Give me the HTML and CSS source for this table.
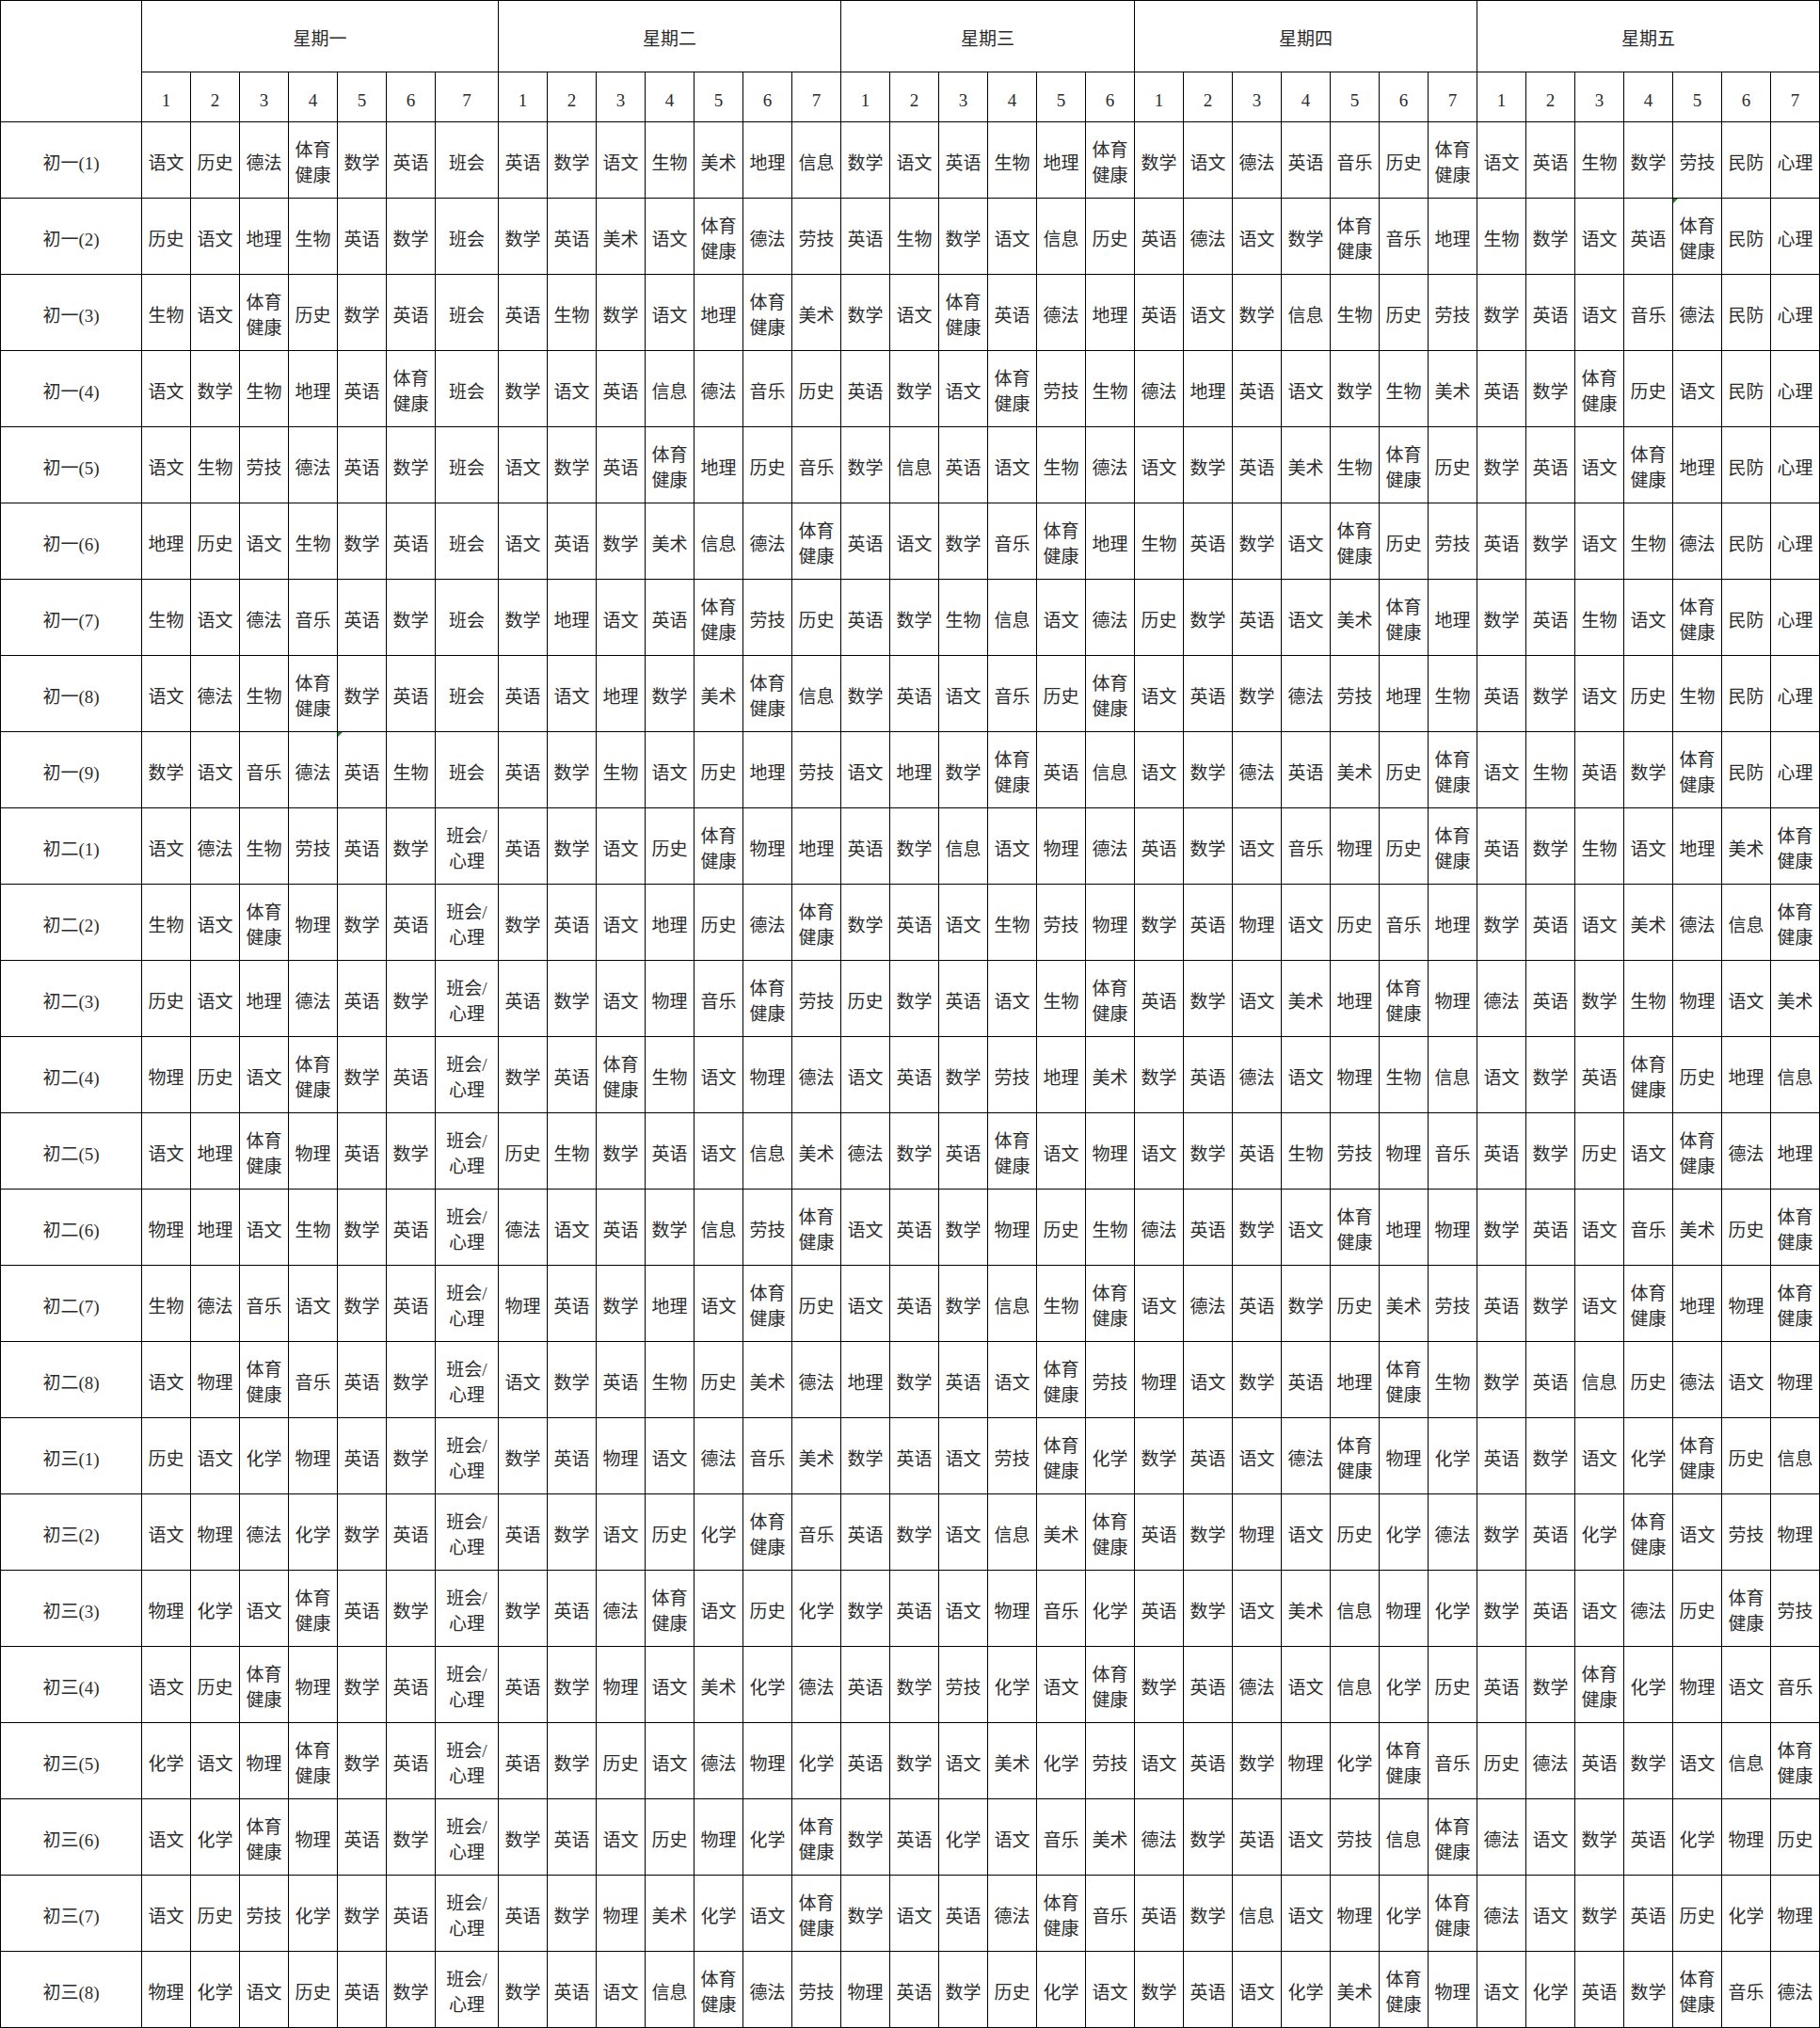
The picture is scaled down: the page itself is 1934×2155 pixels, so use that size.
FILE: index.html
```html
<!DOCTYPE html>
<html lang="zh-CN">
<head>
<meta charset="utf-8">
<title>课程表</title>
<link rel="stylesheet" href="styles.css">
</head>
<body>
<div class="sheet">
<div class="corner"></div>
<div class="day d7">星期一</div><div class="day d7">星期二</div><div class="day d6">星期三</div><div class="day d7">星期四</div><div class="day d7">星期五</div>
<div>1</div><div>2</div><div>3</div><div>4</div><div>5</div><div>6</div><div>7</div>
<div>1</div><div>2</div><div>3</div><div>4</div><div>5</div><div>6</div><div>7</div>
<div>1</div><div>2</div><div>3</div><div>4</div><div>5</div><div>6</div>
<div>1</div><div>2</div><div>3</div><div>4</div><div>5</div><div>6</div><div>7</div>
<div>1</div><div>2</div><div>3</div><div>4</div><div>5</div><div>6</div><div>7</div>

<div>初一(1)</div>
<div>语文</div><div>历史</div><div>德法</div><div><span>体育<br>健康</span></div><div>数学</div><div>英语</div><div>班会</div>
<div>英语</div><div>数学</div><div>语文</div><div>生物</div><div>美术</div><div>地理</div><div>信息</div>
<div>数学</div><div>语文</div><div>英语</div><div>生物</div><div>地理</div><div><span>体育<br>健康</span></div>
<div>数学</div><div>语文</div><div>德法</div><div>英语</div><div>音乐</div><div>历史</div><div><span>体育<br>健康</span></div>
<div>语文</div><div>英语</div><div>生物</div><div>数学</div><div>劳技</div><div>民防</div><div>心理</div>

<div>初一(2)</div>
<div>历史</div><div>语文</div><div>地理</div><div>生物</div><div>英语</div><div>数学</div><div>班会</div>
<div>数学</div><div>英语</div><div>美术</div><div>语文</div><div><span>体育<br>健康</span></div><div>德法</div><div>劳技</div>
<div>英语</div><div>生物</div><div>数学</div><div>语文</div><div>信息</div><div>历史</div>
<div>英语</div><div>德法</div><div>语文</div><div>数学</div><div><span>体育<br>健康</span></div><div>音乐</div><div>地理</div>
<div>生物</div><div>数学</div><div>语文</div><div>英语</div><div class="flag"><span>体育<br>健康</span></div><div>民防</div><div>心理</div>

<div>初一(3)</div>
<div>生物</div><div>语文</div><div><span>体育<br>健康</span></div><div>历史</div><div>数学</div><div>英语</div><div>班会</div>
<div>英语</div><div>生物</div><div>数学</div><div>语文</div><div>地理</div><div><span>体育<br>健康</span></div><div>美术</div>
<div>数学</div><div>语文</div><div><span>体育<br>健康</span></div><div>英语</div><div>德法</div><div>地理</div>
<div>英语</div><div>语文</div><div>数学</div><div>信息</div><div>生物</div><div>历史</div><div>劳技</div>
<div>数学</div><div>英语</div><div>语文</div><div>音乐</div><div>德法</div><div>民防</div><div>心理</div>

<div>初一(4)</div>
<div>语文</div><div>数学</div><div>生物</div><div>地理</div><div>英语</div><div><span>体育<br>健康</span></div><div>班会</div>
<div>数学</div><div>语文</div><div>英语</div><div>信息</div><div>德法</div><div>音乐</div><div>历史</div>
<div>英语</div><div>数学</div><div>语文</div><div><span>体育<br>健康</span></div><div>劳技</div><div>生物</div>
<div>德法</div><div>地理</div><div>英语</div><div>语文</div><div>数学</div><div>生物</div><div>美术</div>
<div>英语</div><div>数学</div><div><span>体育<br>健康</span></div><div>历史</div><div>语文</div><div>民防</div><div>心理</div>

<div>初一(5)</div>
<div>语文</div><div>生物</div><div>劳技</div><div>德法</div><div>英语</div><div>数学</div><div>班会</div>
<div>语文</div><div>数学</div><div>英语</div><div><span>体育<br>健康</span></div><div>地理</div><div>历史</div><div>音乐</div>
<div>数学</div><div>信息</div><div>英语</div><div>语文</div><div>生物</div><div>德法</div>
<div>语文</div><div>数学</div><div>英语</div><div>美术</div><div>生物</div><div><span>体育<br>健康</span></div><div>历史</div>
<div>数学</div><div>英语</div><div>语文</div><div><span>体育<br>健康</span></div><div>地理</div><div>民防</div><div>心理</div>

<div>初一(6)</div>
<div>地理</div><div>历史</div><div>语文</div><div>生物</div><div>数学</div><div>英语</div><div>班会</div>
<div>语文</div><div>英语</div><div>数学</div><div>美术</div><div>信息</div><div>德法</div><div><span>体育<br>健康</span></div>
<div>英语</div><div>语文</div><div>数学</div><div>音乐</div><div><span>体育<br>健康</span></div><div>地理</div>
<div>生物</div><div>英语</div><div>数学</div><div>语文</div><div><span>体育<br>健康</span></div><div>历史</div><div>劳技</div>
<div>英语</div><div>数学</div><div>语文</div><div>生物</div><div>德法</div><div>民防</div><div>心理</div>

<div>初一(7)</div>
<div>生物</div><div>语文</div><div>德法</div><div>音乐</div><div>英语</div><div>数学</div><div>班会</div>
<div>数学</div><div>地理</div><div>语文</div><div>英语</div><div><span>体育<br>健康</span></div><div>劳技</div><div>历史</div>
<div>英语</div><div>数学</div><div>生物</div><div>信息</div><div>语文</div><div>德法</div>
<div>历史</div><div>数学</div><div>英语</div><div>语文</div><div>美术</div><div><span>体育<br>健康</span></div><div>地理</div>
<div>数学</div><div>英语</div><div>生物</div><div>语文</div><div><span>体育<br>健康</span></div><div>民防</div><div>心理</div>

<div>初一(8)</div>
<div>语文</div><div>德法</div><div>生物</div><div><span>体育<br>健康</span></div><div>数学</div><div>英语</div><div>班会</div>
<div>英语</div><div>语文</div><div>地理</div><div>数学</div><div>美术</div><div><span>体育<br>健康</span></div><div>信息</div>
<div>数学</div><div>英语</div><div>语文</div><div>音乐</div><div>历史</div><div><span>体育<br>健康</span></div>
<div>语文</div><div>英语</div><div>数学</div><div>德法</div><div>劳技</div><div>地理</div><div>生物</div>
<div>英语</div><div>数学</div><div>语文</div><div>历史</div><div>生物</div><div>民防</div><div>心理</div>

<div>初一(9)</div>
<div>数学</div><div>语文</div><div>音乐</div><div>德法</div><div class="flag">英语</div><div>生物</div><div>班会</div>
<div>英语</div><div>数学</div><div>生物</div><div>语文</div><div>历史</div><div>地理</div><div>劳技</div>
<div>语文</div><div>地理</div><div>数学</div><div><span>体育<br>健康</span></div><div>英语</div><div>信息</div>
<div>语文</div><div>数学</div><div>德法</div><div>英语</div><div>美术</div><div>历史</div><div><span>体育<br>健康</span></div>
<div>语文</div><div>生物</div><div>英语</div><div>数学</div><div><span>体育<br>健康</span></div><div>民防</div><div>心理</div>

<div>初二(1)</div>
<div>语文</div><div>德法</div><div>生物</div><div>劳技</div><div>英语</div><div>数学</div><div><span>班会/<br>心理</span></div>
<div>英语</div><div>数学</div><div>语文</div><div>历史</div><div><span>体育<br>健康</span></div><div>物理</div><div>地理</div>
<div>英语</div><div>数学</div><div>信息</div><div>语文</div><div>物理</div><div>德法</div>
<div>英语</div><div>数学</div><div>语文</div><div>音乐</div><div>物理</div><div>历史</div><div><span>体育<br>健康</span></div>
<div>英语</div><div>数学</div><div>生物</div><div>语文</div><div>地理</div><div>美术</div><div><span>体育<br>健康</span></div>

<div>初二(2)</div>
<div>生物</div><div>语文</div><div><span>体育<br>健康</span></div><div>物理</div><div>数学</div><div>英语</div><div><span>班会/<br>心理</span></div>
<div>数学</div><div>英语</div><div>语文</div><div>地理</div><div>历史</div><div>德法</div><div><span>体育<br>健康</span></div>
<div>数学</div><div>英语</div><div>语文</div><div>生物</div><div>劳技</div><div>物理</div>
<div>数学</div><div>英语</div><div>物理</div><div>语文</div><div>历史</div><div>音乐</div><div>地理</div>
<div>数学</div><div>英语</div><div>语文</div><div>美术</div><div>德法</div><div>信息</div><div><span>体育<br>健康</span></div>

<div>初二(3)</div>
<div>历史</div><div>语文</div><div>地理</div><div>德法</div><div>英语</div><div>数学</div><div><span>班会/<br>心理</span></div>
<div>英语</div><div>数学</div><div>语文</div><div>物理</div><div>音乐</div><div><span>体育<br>健康</span></div><div>劳技</div>
<div>历史</div><div>数学</div><div>英语</div><div>语文</div><div>生物</div><div><span>体育<br>健康</span></div>
<div>英语</div><div>数学</div><div>语文</div><div>美术</div><div>地理</div><div><span>体育<br>健康</span></div><div>物理</div>
<div>德法</div><div>英语</div><div>数学</div><div>生物</div><div>物理</div><div>语文</div><div>美术</div>

<div>初二(4)</div>
<div>物理</div><div>历史</div><div>语文</div><div><span>体育<br>健康</span></div><div>数学</div><div>英语</div><div><span>班会/<br>心理</span></div>
<div>数学</div><div>英语</div><div><span>体育<br>健康</span></div><div>生物</div><div>语文</div><div>物理</div><div>德法</div>
<div>语文</div><div>英语</div><div>数学</div><div>劳技</div><div>地理</div><div>美术</div>
<div>数学</div><div>英语</div><div>德法</div><div>语文</div><div>物理</div><div>生物</div><div>信息</div>
<div>语文</div><div>数学</div><div>英语</div><div><span>体育<br>健康</span></div><div>历史</div><div>地理</div><div>信息</div>

<div>初二(5)</div>
<div>语文</div><div>地理</div><div><span>体育<br>健康</span></div><div>物理</div><div>英语</div><div>数学</div><div><span>班会/<br>心理</span></div>
<div>历史</div><div>生物</div><div>数学</div><div>英语</div><div>语文</div><div>信息</div><div>美术</div>
<div>德法</div><div>数学</div><div>英语</div><div><span>体育<br>健康</span></div><div>语文</div><div>物理</div>
<div>语文</div><div>数学</div><div>英语</div><div>生物</div><div>劳技</div><div>物理</div><div>音乐</div>
<div>英语</div><div>数学</div><div>历史</div><div>语文</div><div><span>体育<br>健康</span></div><div>德法</div><div>地理</div>

<div>初二(6)</div>
<div>物理</div><div>地理</div><div>语文</div><div>生物</div><div>数学</div><div>英语</div><div><span>班会/<br>心理</span></div>
<div>德法</div><div>语文</div><div>英语</div><div>数学</div><div>信息</div><div>劳技</div><div><span>体育<br>健康</span></div>
<div>语文</div><div>英语</div><div>数学</div><div>物理</div><div>历史</div><div>生物</div>
<div>德法</div><div>英语</div><div>数学</div><div>语文</div><div><span>体育<br>健康</span></div><div>地理</div><div>物理</div>
<div>数学</div><div>英语</div><div>语文</div><div>音乐</div><div>美术</div><div>历史</div><div><span>体育<br>健康</span></div>

<div>初二(7)</div>
<div>生物</div><div>德法</div><div>音乐</div><div>语文</div><div>数学</div><div>英语</div><div><span>班会/<br>心理</span></div>
<div>物理</div><div>英语</div><div>数学</div><div>地理</div><div>语文</div><div><span>体育<br>健康</span></div><div>历史</div>
<div>语文</div><div>英语</div><div>数学</div><div>信息</div><div>生物</div><div><span>体育<br>健康</span></div>
<div>语文</div><div>德法</div><div>英语</div><div>数学</div><div>历史</div><div>美术</div><div>劳技</div>
<div>英语</div><div>数学</div><div>语文</div><div><span>体育<br>健康</span></div><div>地理</div><div>物理</div><div><span>体育<br>健康</span></div>

<div>初二(8)</div>
<div>语文</div><div>物理</div><div><span>体育<br>健康</span></div><div>音乐</div><div>英语</div><div>数学</div><div><span>班会/<br>心理</span></div>
<div>语文</div><div>数学</div><div>英语</div><div>生物</div><div>历史</div><div>美术</div><div>德法</div>
<div>地理</div><div>数学</div><div>英语</div><div>语文</div><div><span>体育<br>健康</span></div><div>劳技</div>
<div>物理</div><div>语文</div><div>数学</div><div>英语</div><div>地理</div><div><span>体育<br>健康</span></div><div>生物</div>
<div>数学</div><div>英语</div><div>信息</div><div>历史</div><div>德法</div><div>语文</div><div>物理</div>

<div>初三(1)</div>
<div>历史</div><div>语文</div><div>化学</div><div>物理</div><div>英语</div><div>数学</div><div><span>班会/<br>心理</span></div>
<div>数学</div><div>英语</div><div>物理</div><div>语文</div><div>德法</div><div>音乐</div><div>美术</div>
<div>数学</div><div>英语</div><div>语文</div><div>劳技</div><div><span>体育<br>健康</span></div><div>化学</div>
<div>数学</div><div>英语</div><div>语文</div><div>德法</div><div><span>体育<br>健康</span></div><div>物理</div><div>化学</div>
<div>英语</div><div>数学</div><div>语文</div><div>化学</div><div><span>体育<br>健康</span></div><div>历史</div><div>信息</div>

<div>初三(2)</div>
<div>语文</div><div>物理</div><div>德法</div><div>化学</div><div>数学</div><div>英语</div><div><span>班会/<br>心理</span></div>
<div>英语</div><div>数学</div><div>语文</div><div>历史</div><div>化学</div><div><span>体育<br>健康</span></div><div>音乐</div>
<div>英语</div><div>数学</div><div>语文</div><div>信息</div><div>美术</div><div><span>体育<br>健康</span></div>
<div>英语</div><div>数学</div><div>物理</div><div>语文</div><div>历史</div><div>化学</div><div>德法</div>
<div>数学</div><div>英语</div><div>化学</div><div><span>体育<br>健康</span></div><div>语文</div><div>劳技</div><div>物理</div>

<div>初三(3)</div>
<div>物理</div><div>化学</div><div>语文</div><div><span>体育<br>健康</span></div><div>英语</div><div>数学</div><div><span>班会/<br>心理</span></div>
<div>数学</div><div>英语</div><div>德法</div><div><span>体育<br>健康</span></div><div>语文</div><div>历史</div><div>化学</div>
<div>数学</div><div>英语</div><div>语文</div><div>物理</div><div>音乐</div><div>化学</div>
<div>英语</div><div>数学</div><div>语文</div><div>美术</div><div>信息</div><div>物理</div><div>化学</div>
<div>数学</div><div>英语</div><div>语文</div><div>德法</div><div>历史</div><div><span>体育<br>健康</span></div><div>劳技</div>

<div>初三(4)</div>
<div>语文</div><div>历史</div><div><span>体育<br>健康</span></div><div>物理</div><div>数学</div><div>英语</div><div><span>班会/<br>心理</span></div>
<div>英语</div><div>数学</div><div>物理</div><div>语文</div><div>美术</div><div>化学</div><div>德法</div>
<div>英语</div><div>数学</div><div>劳技</div><div>化学</div><div>语文</div><div><span>体育<br>健康</span></div>
<div>数学</div><div>英语</div><div>德法</div><div>语文</div><div>信息</div><div>化学</div><div>历史</div>
<div>英语</div><div>数学</div><div><span>体育<br>健康</span></div><div>化学</div><div>物理</div><div>语文</div><div>音乐</div>

<div>初三(5)</div>
<div>化学</div><div>语文</div><div>物理</div><div><span>体育<br>健康</span></div><div>数学</div><div>英语</div><div><span>班会/<br>心理</span></div>
<div>英语</div><div>数学</div><div>历史</div><div>语文</div><div>德法</div><div>物理</div><div>化学</div>
<div>英语</div><div>数学</div><div>语文</div><div>美术</div><div>化学</div><div>劳技</div>
<div>语文</div><div>英语</div><div>数学</div><div>物理</div><div>化学</div><div><span>体育<br>健康</span></div><div>音乐</div>
<div>历史</div><div>德法</div><div>英语</div><div>数学</div><div>语文</div><div>信息</div><div><span>体育<br>健康</span></div>

<div>初三(6)</div>
<div>语文</div><div>化学</div><div><span>体育<br>健康</span></div><div>物理</div><div>英语</div><div>数学</div><div><span>班会/<br>心理</span></div>
<div>数学</div><div>英语</div><div>语文</div><div>历史</div><div>物理</div><div>化学</div><div><span>体育<br>健康</span></div>
<div>数学</div><div>英语</div><div>化学</div><div>语文</div><div>音乐</div><div>美术</div>
<div>德法</div><div>数学</div><div>英语</div><div>语文</div><div>劳技</div><div>信息</div><div><span>体育<br>健康</span></div>
<div>德法</div><div>语文</div><div>数学</div><div>英语</div><div>化学</div><div>物理</div><div>历史</div>

<div>初三(7)</div>
<div>语文</div><div>历史</div><div>劳技</div><div>化学</div><div>数学</div><div>英语</div><div><span>班会/<br>心理</span></div>
<div>英语</div><div>数学</div><div>物理</div><div>美术</div><div>化学</div><div>语文</div><div><span>体育<br>健康</span></div>
<div>数学</div><div>语文</div><div>英语</div><div>德法</div><div><span>体育<br>健康</span></div><div>音乐</div>
<div>英语</div><div>数学</div><div>信息</div><div>语文</div><div>物理</div><div>化学</div><div><span>体育<br>健康</span></div>
<div>德法</div><div>语文</div><div>数学</div><div>英语</div><div>历史</div><div>化学</div><div>物理</div>

<div>初三(8)</div>
<div>物理</div><div>化学</div><div>语文</div><div>历史</div><div>英语</div><div>数学</div><div><span>班会/<br>心理</span></div>
<div>数学</div><div>英语</div><div>语文</div><div>信息</div><div><span>体育<br>健康</span></div><div>德法</div><div>劳技</div>
<div>物理</div><div>英语</div><div>数学</div><div>历史</div><div>化学</div><div>语文</div>
<div>数学</div><div>英语</div><div>语文</div><div>化学</div><div>美术</div><div><span>体育<br>健康</span></div><div>物理</div>
<div>语文</div><div>化学</div><div>英语</div><div>数学</div><div><span>体育<br>健康</span></div><div>音乐</div><div>德法</div>
</div>
</body>
</html>
```

FILE: styles.css
```css
html, body {
  margin: 0;
  padding: 0;
  background: #fff;
}

.sheet {
  display: grid;
  grid-template-columns: 149px repeat(6, 51px) 66px repeat(27, 51px);
  grid-template-rows: 75px 52px repeat(25, 80px);
  gap: 1px;
  width: max-content;
  background: #000;
  border: 1px solid #000;
  font-family: "Liberation Serif", "Noto Sans CJK SC", serif;
  font-size: 19px;
  line-height: 27px;
  color: #2b2b2b;
}

.sheet > div {
  display: flex;
  align-items: center;
  justify-content: center;
  box-sizing: border-box;
  padding-top: 6px;
  text-align: center;
  background: #fff;
  overflow: hidden;
}

.sheet > .corner {
  grid-row: span 2;
}

.sheet > .d7 {
  grid-column: span 7;
}

.sheet > .d6 {
  grid-column: span 6;
}

.sheet > .flag {
  position: relative;
}

.sheet > .flag::before {
  content: "";
  position: absolute;
  left: 0;
  top: 0;
  width: 0;
  height: 0;
  border-style: solid;
  border-width: 5px 5px 0 0;
  border-color: #1d8a1d transparent transparent transparent;
}
```
